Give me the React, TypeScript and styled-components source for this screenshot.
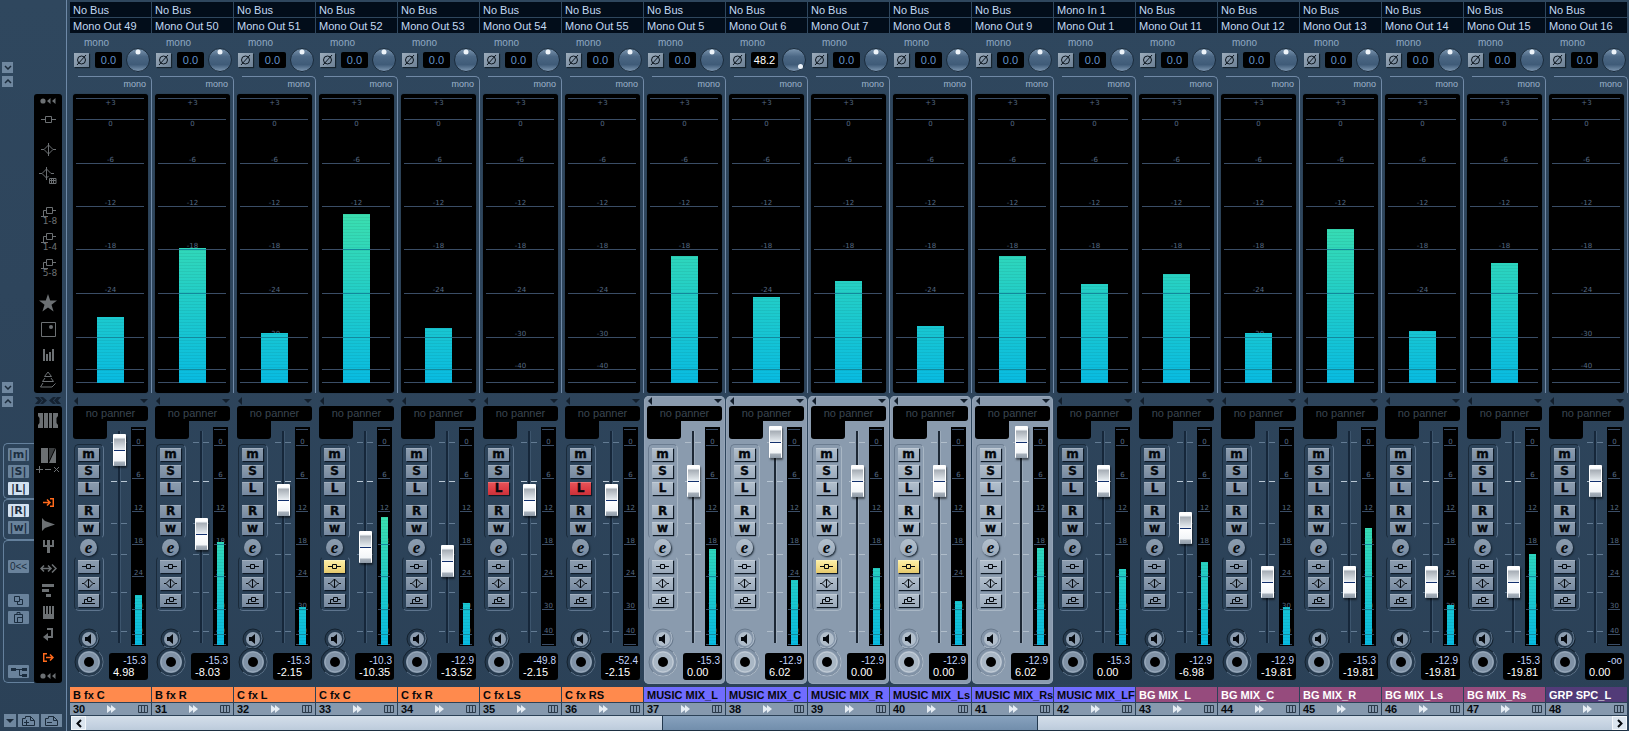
import React, { useState } from 'react';
import styled, { createGlobalStyle, css } from 'styled-components';

const sans = '"Liberation Sans", Arial, sans-serif';
const wide = '"DejaVu Sans", Verdana, sans-serif';

const GlobalStyle = createGlobalStyle`
  * { box-sizing: border-box; }
  body { margin: 0; background: #2c4359; font-family: ${sans}; font-size: 11px; color: #c3d9f2; }
  button { font: inherit; color: inherit; padding: 0; border: 0; background: none; cursor: pointer; }
  svg { display: block; }
`;

/* ---------- data ---------- */

type Channel = {
  id: number;
  name: string;
  tone: string;
  light?: boolean;
  input?: string;
  output: string;
  pan?: string;
  level: number;
  slim: number;
  fader: number;
  peak: string;
  gain: string;
  selected?: boolean;
  listen?: boolean;
  insert?: boolean;
};

const ORANGE = '#ff8a4d';
const BLUE = '#706cff';
const PLUM = '#964b7d';
const VIOLET = '#523b78';

const channels: Channel[] = [
  { id: 30, name: 'B fx C', tone: ORANGE, output: 'Mono Out 49', level: 66, slim: 50, fader: 182, peak: '-15.3', gain: '4.98' },
  { id: 31, name: 'B fx R', tone: ORANGE, output: 'Mono Out 50', level: 135, slim: 103, fader: 98, peak: '-15.3', gain: '-8.03' },
  { id: 32, name: 'C fx L', tone: ORANGE, output: 'Mono Out 51', level: 50, slim: 38, fader: 132, peak: '-15.3', gain: '-2.15' },
  { id: 33, name: 'C fx C', tone: ORANGE, output: 'Mono Out 52', level: 169, slim: 128, fader: 85, peak: '-10.3', gain: '-10.35', insert: true },
  { id: 34, name: 'C fx R', tone: ORANGE, output: 'Mono Out 53', level: 55, slim: 42, fader: 71, peak: '-12.9', gain: '-13.52' },
  { id: 35, name: 'C fx LS', tone: ORANGE, output: 'Mono Out 54', level: 0, slim: 0, fader: 132, peak: '-49.8', gain: '-2.15', listen: true },
  { id: 36, name: 'C fx RS', tone: ORANGE, output: 'Mono Out 55', level: 0, slim: 0, fader: 132, peak: '-52.4', gain: '-2.15', listen: true },
  { id: 37, name: 'MUSIC MIX_L', tone: BLUE, output: 'Mono Out 5', level: 127, slim: 96, fader: 151, peak: '-15.3', gain: '0.00', selected: true },
  { id: 38, name: 'MUSIC MIX_C', tone: BLUE, output: 'Mono Out 6', pan: '48.2', level: 86, slim: 65, fader: 190, peak: '-12.9', gain: '6.02', selected: true },
  { id: 39, name: 'MUSIC MIX_R', tone: BLUE, output: 'Mono Out 7', level: 102, slim: 77, fader: 151, peak: '-12.9', gain: '0.00', selected: true, insert: true },
  { id: 40, name: 'MUSIC MIX_Ls', tone: BLUE, output: 'Mono Out 8', level: 57, slim: 44, fader: 151, peak: '-12.9', gain: '0.00', selected: true, insert: true },
  { id: 41, name: 'MUSIC MIX_Rs', tone: BLUE, output: 'Mono Out 9', level: 127, slim: 97, fader: 190, peak: '-12.9', gain: '6.02', selected: true },
  { id: 42, name: 'MUSIC MIX_LFE', tone: BLUE, input: 'Mono In 1', output: 'Mono Out 1', level: 99, slim: 76, fader: 151, peak: '-15.3', gain: '0.00' },
  { id: 43, name: 'BG MIX_L', tone: PLUM, light: true, output: 'Mono Out 11', level: 109, slim: 83, fader: 104, peak: '-12.9', gain: '-6.98' },
  { id: 44, name: 'BG MIX_C', tone: PLUM, light: true, output: 'Mono Out 12', level: 50, slim: 38, fader: 50, peak: '-12.9', gain: '-19.81' },
  { id: 45, name: 'BG MIX_R', tone: PLUM, light: true, output: 'Mono Out 13', level: 154, slim: 117, fader: 50, peak: '-15.3', gain: '-19.81' },
  { id: 46, name: 'BG MIX_Ls', tone: PLUM, light: true, output: 'Mono Out 14', level: 52, slim: 40, fader: 50, peak: '-12.9', gain: '-19.81' },
  { id: 47, name: 'BG MIX_Rs', tone: PLUM, light: true, output: 'Mono Out 15', level: 120, slim: 91, fader: 50, peak: '-15.3', gain: '-19.81' },
  { id: 48, name: 'GRP SPC_L', tone: VIOLET, light: true, output: 'Mono Out 16', level: 0, slim: 0, fader: 151, peak: '-oo', gain: '0.00' },
];

/* ---------- page frame ---------- */

const Page = styled.div`
  display: flex;
  min-height: 100vh;
  background: linear-gradient(#2f475e, #2e455c 40%, #2b4157);
`;

const Sidebar = styled.aside`
  flex: none;
  width: 67px;
  display: flex;
  border-right: 1px solid #6e89a7;
`;

const Mixer = styled.main`
  flex: 1;
  min-width: 0;
  margin-left: 3px;
  display: flex;
  flex-direction: column;
`;

const Strips = styled.div`
  display: flex;
  overflow: hidden;
`;

/* ---------- channel strip ---------- */

const Strip = styled.section`
  flex: none;
  width: 82px;
  padding-top: 2px;
`;

const Bus = styled.button`
  display: block;
  width: 81px;
  height: 15px;
  margin-bottom: 1px;
  padding-left: 3px;
  line-height: 16px;
  text-align: left;
  white-space: nowrap;
  background: #020d1a;
`;

const InputArea = styled.div`
  height: 43px;
  margin-top: -1px;
  padding-top: 4px;
`;

const Tag = styled.div`
  height: 11px;
  padding-left: 14px;
  font-size: 10px;
  line-height: 11px;
  color: #8ea8c2;
`;

const InputRow = styled.div`
  display: flex;
  align-items: center;
  height: 24px;
  padding-left: 4px;
`;

const PhaseButton = styled.button`
  width: 15px;
  height: 14px;
  background: linear-gradient(135deg, #9dadbc, #6c8095);
  box-shadow: 1px 1px 1px #16242f;
  color: #0b141d;
`;

const PanField = styled.input<{ $bright?: boolean }>`
  width: 27px;
  height: 16px;
  margin: 0 4px 0 6px;
  padding: 0;
  border: 0;
  border-radius: 2px;
  background: #000;
  color: ${p => (p.$bright ? '#fff' : '#6293cb')};
  font: 11px ${sans};
  text-align: center;
`;

const KnobLabel = styled.label`
  display: grid;
  width: 24px;
  height: 24px;
  > * { grid-area: 1 / 1; }
`;

const HiddenRange = styled.input`
  width: 24px;
  height: 24px;
  margin: 0;
  opacity: 0;
`;

const FrameTitle = styled.div`
  height: 18px;
  margin-left: 8px;
  padding: 0 5px 0 0;
  border: 1px solid #7089a6;
  border-width: 1px 1px 0 0;
  border-top-right-radius: 5px;
  font-size: 9px;
  line-height: 14px;
  text-align: right;
  color: #9db4cb;
`;

const FrameBody = styled.div`
  padding-left: 3px;
  border-right: 1px solid #7089a6;
`;

const MeterWell = styled.div`
  width: 75px;
  border-radius: 3px;
  background: #000;
  box-shadow: 0 0 1px #15222f;
`;

const Panel = styled.div<{ $selected?: boolean }>`
  width: 81px;
  height: 288px;
  margin: 3px 0;
  border-radius: 5px;
  ${p =>
    p.$selected &&
    css`
      background: #8a9bae;
      box-shadow: inset 0 0 1px 1px #95a6b8;
    `}
`;

const PanelHead = styled.div`
  display: flex;
  justify-content: space-between;
  align-items: center;
  height: 10px;
  padding: 0 3px 0 4px;
  color: #131f2c;
`;

const Panner = styled.div`
  width: 75px;
  height: 15px;
  margin-left: 3px;
  border-radius: 3px 3px 3px 0;
  background: #000;
  font-size: 11px;
  line-height: 14px;
  text-align: center;
  color: #3b4650;
`;

const PanelBody = styled.div`
  display: flex;
`;

const Controls = styled.div`
  flex: none;
  width: 36px;
  padding-left: 3px;
`;

const PannerTail = styled.div`
  width: 34px;
  height: 18px;
  margin-bottom: 5px;
  border-radius: 0 0 3px 3px;
  background: #000;
`;

const Group = styled.div<{ $open: 'bottom' | 'top'; $selected?: boolean }>`
  display: flex;
  flex-direction: column;
  gap: 4px;
  width: 30px;
  margin-left: 1px;
  padding: 3px;
  border: 1px solid ${p => (p.$selected ? '#a9b7c5' : '#5e758e')};
  border-left-color: ${p => (p.$selected ? '#6b7c90' : '#1a2a3a')};
  border-top-color: ${p => (p.$open === 'top' ? 'transparent' : p.$selected ? '#6b7c90' : '#1a2a3a')};
  border-bottom-color: ${p => (p.$open === 'bottom' ? 'transparent' : p.$selected ? '#a9b7c5' : '#5e758e')};
  border-radius: 5px;
`;

const face = {
  normal: 'linear-gradient(#8c9db0, #8495a8 50%, #7588a0)',
  selected: 'linear-gradient(#b3c0cd, #a8b6c5 50%, #9aa9ba)',
  red: 'linear-gradient(#e8555a, #dd3c44 60%, #c9323a)',
  yellow: 'linear-gradient(#fdf0a8, #f3dc86 60%, #e5c96c)',
};

const Key = styled.button<{ $face: keyof typeof face; $spaced?: boolean }>`
  display: grid;
  place-items: center;
  width: 21px;
  height: 13px;
  margin-top: ${p => (p.$spaced ? '6px' : '0')};
  background: ${p => face[p.$face]};
  box-shadow: 1px 1px 1px #0f1a26, inset 0 1px 0 rgba(255, 255, 255, 0.2);
  color: #05090e;
  font: 900 12px/13px ${wide};
  -webkit-text-stroke: 0.4px #05090e;
`;

const EditButton = styled.button<{ $selected?: boolean }>`
  display: block;
  width: 17px;
  height: 17px;
  margin-left: 7px;
  border-radius: 50%;
  background: ${p => (p.$selected ? face.selected : face.normal)};
  box-shadow: 1px 1px 2px #101c28;
  color: #05090e;
  font: italic bold 17px/13px "Liberation Serif", "Times New Roman", serif;
`;

const MonitorButton = styled.button`
  display: block;
  margin: 17px 0 0 5px;
`;

const RecordButton = styled.button`
  display: block;
  margin: -3px 0 0 1px;
`;

const LevelArea = styled.div`
  padding-left: 3px;
`;

const LevelRow = styled.div`
  display: flex;
  height: 232px;
`;

const FaderCell = styled.div`
  display: grid;
  justify-items: center;
  width: 20px;
  margin-right: 2px;
  > * { grid-area: 1 / 1; }
`;

const FaderInput = styled.input`
  appearance: none;
  writing-mode: vertical-lr;
  direction: rtl;
  width: 13px;
  height: 222px;
  margin: 5px 0 0;
  background: transparent;
  &::-webkit-slider-runnable-track { width: 13px; background: transparent; }
  &::-webkit-slider-thumb {
    appearance: none;
    width: 13px;
    height: 32px;
    border: solid #ffffff;
    border-width: 0 1px;
    border-radius: 1px;
    background: linear-gradient(
      #ffffff 0 3px, #eef3f7 4px, #a6adb5 5px, #dde3e8 14px, #eef2f6 16px,
      #12306e 16px 17px, #ffffff 17px, #f2f5f8 27px, #a9b2bc 28px, #8f9ba8
    );
    box-shadow: 1px 2px 2px rgba(0, 0, 0, 0.5);
  }
`;

const SlimWell = styled.div`
  width: 15px;
  height: 219px;
  margin-top: 6px;
  background: #000;
`;

const Readout = styled.div`
  width: 39px;
  height: 27px;
  padding: 2px 2px 0 4px;
  border-radius: 3px;
  background: #000;
  line-height: 11px;
`;

const Peak = styled.output`
  display: block;
  font-size: 10px;
  line-height: 12px;
  text-align: right;
  color: #c1d4fb;
`;

const Gain = styled.output`
  display: block;
  color: #fff;
`;

const Name = styled.div<{ $tone: string; $light?: boolean }>`
  width: 81px;
  height: 15px;
  padding-left: 3px;
  overflow: hidden;
  background: ${p => p.$tone};
  color: ${p => (p.$light ? '#fff' : '#08080c')};
  font-weight: bold;
  line-height: 16px;
  white-space: nowrap;
`;

const NumberRow = styled.div`
  display: grid;
  grid-template-columns: 34px 31px 10px;
  align-items: center;
  width: 81px;
  height: 12px;
  margin: 1px 0;
  padding-left: 3px;
  background: #8699ae;
  color: #06090d;
  font-weight: bold;
  line-height: 12px;
`;

/* ---------- scroll bar ---------- */

const ScrollBar = styled.div`
  display: flex;
  height: 15px;
  margin: 0 2px 0 1px;
  border-bottom: 1px solid #1d3042;
`;

const ScrollArrow = styled.button`
  flex: none;
  display: grid;
  place-items: center;
  width: 15px;
  background: #dbe5ef;
  border: 1px solid #f3f7fb;
  color: #05090e;
`;

const Trough = styled.div`
  flex: 1;
  display: flex;
  background: linear-gradient(#d3dee9, #c6d3e2 60%, #bccbdb);
`;

const ScrollSpace = styled.div<{ $share: number }>`
  flex: ${p => p.$share};
`;

const ScrollThumb = styled.div<{ $share: number }>`
  flex: ${p => p.$share};
  border: 1px solid #22384e;
  border-width: 0 1px;
  background: linear-gradient(#88a2be, #7a96b3 60%, #728eac);
`;

/* ---------- sidebar ---------- */

const Rail = styled.div`
  flex: none;
  width: 34px;
  display: flex;
  flex-direction: column;
  padding-top: 62px;
`;

const FoldPair = styled.div<{ $before?: number }>`
  display: flex;
  flex-direction: column;
  gap: 3px;
  margin: ${p => p.$before ?? 0}px 0 0 2px;
`;

const FoldButton = styled.button`
  display: grid;
  place-items: center;
  width: 11px;
  height: 11px;
  background: #6f879f;
  color: #1b2b3b;
`;

const RailGroup = styled.div<{ $before?: number; $height: number }>`
  display: flex;
  flex-direction: column;
  gap: 4px;
  height: ${p => p.$height}px;
  margin: ${p => p.$before ?? 0}px 0 0 3px;
  padding: 4px;
  border: 1px solid #64809c;
  border-right: 0;
  border-radius: 5px 0 0 5px;
`;

const RailKey = styled.button<{ $on?: boolean; $before?: number }>`
  display: grid;
  place-items: center;
  width: 21px;
  height: 13px;
  margin-top: ${p => p.$before ?? 0}px;
  border-radius: 1px;
  background: ${p => (p.$on ? '#d3e2f1' : '#69829b')};
  color: #1b2d3f;
  font: bold 11px/13px ${wide};
  white-space: nowrap;
`;

const Plain = styled.span`
  font: 10px/13px ${sans};
`;

const IconRail = styled.div`
  flex: none;
  width: 28px;
  display: flex;
  flex-direction: column;
  padding-top: 94px;
`;

const IconColumn = styled.div<{ $height: number }>`
  display: flex;
  flex-direction: column;
  height: ${p => p.$height}px;
  border-radius: 3px;
  background: #000;
  color: #6c7073;
`;

const Slot = styled.button<{ $size: number; $before?: number; $hot?: boolean }>`
  display: flex;
  flex-direction: column;
  align-items: center;
  justify-content: center;
  height: ${p => p.$size}px;
  margin-top: ${p => p.$before ?? 0}px;
  color: ${p => (p.$hot ? '#ff6a1c' : 'inherit')};
`;

const Range = styled.span`
  padding-left: 4px;
  font: 9px/7px ${wide};
`;

const Joint = styled.div`
  display: flex;
  justify-content: center;
  align-items: center;
  height: 13px;
  padding-top: 1px;
  color: #142130;
`;

const BottomKeys = styled.div`
  display: flex;
  gap: 2px;
  width: 60px;
  margin: 31px 0 0 4px;
`;

const BottomKey = styled.button<{ $w: number }>`
  display: grid;
  place-items: center;
  flex: none;
  width: ${p => p.$w}px;
  height: 13px;
  background: #6f879f;
  color: #1b2b3b;
`;

/* ---------- drawings ---------- */

const stroke = { fill: 'none', stroke: 'currentColor', strokeWidth: 1 } as const;

const Phase = () => (
  <svg width="15" height="14" viewBox="0 0 15 14" {...stroke}>
    <circle cx="7.5" cy="7" r="4" />
    <path d="M3 12L12 2" />
  </svg>
);

const InsertIcon = () => (
  <svg width="15" height="7" viewBox="0 0 15 7" {...stroke}>
    <path d="M0 3.5H4.500M10.500 3.5H15M4.500 .5H10.500V6.500H4.500Z" />
  </svg>
);

const KeyInsertIcon = () => (
  <svg width="15" height="5" viewBox="0 0 15 5" {...stroke}>
    <path d="M1 2.500H5.500M9.500 2.500H14M5.500 .5H9.500V4.500H5.500Z" />
  </svg>
);

const EqIcon = () => (
  <svg width="15" height="15" viewBox="0 0 15 15" {...stroke}>
    <path d="M0 7.5H3L7.5 3L12 7.5H15M3 7.5L7.5 12L12 7.5M7.5 1V14" />
  </svg>
);

const SmallEqIcon = () => (
  <svg width="15" height="11" viewBox="0 0 15 11" {...stroke}>
    <path d="M1 5.5H3L7.5 1L12 5.5H14M3 5.5L7.5 10L12 5.5M7.5 1V10" />
  </svg>
);

const SendIcon = () => (
  <svg width="15" height="7" viewBox="0 0 15 7" {...stroke}>
    <path d="M1 6.500H14M3.500 6V2.500H6.500M6.500 .5H10.500V4.500H6.500ZM11 2.500H13.500" />
  </svg>
);

const RoutedIcon = () => (
  <svg width="15" height="12" viewBox="0 0 15 12" {...stroke}>
    <path d="M0 10.500H7M2.500 10V4.500H5M5.500 1.500H11.500V7.500H5.500ZM12 4.500H15" />
  </svg>
);

const Speaker = ({ selected }: { selected?: boolean }) => (
  <svg width="22" height="22" viewBox="0 0 22 22">
    <circle cx="11" cy="11" r="10" fill={selected ? '#8394a8' : '#263a4e'} stroke={selected ? '#68798c' : '#14222f'} />
    <path d="M18 4A10 10 0 0 1 4 18" fill="none" stroke={selected ? '#b0bdcb' : '#60778f'} />
    <circle cx="11" cy="11" r="7" fill={selected ? '#b1becb' : '#8c9db0'} />
    <path d="M7 9H9.500L13 6V16L9.500 13H7Z" fill="#05090e" />
  </svg>
);

const RecordDial = ({ selected }: { selected?: boolean }) => (
  <svg width="30" height="30" viewBox="0 0 30 30">
    <circle cx="15" cy="15" r="14" fill={selected ? '#8192a6' : '#263a4e'} stroke={selected ? '#68798c' : '#14222f'} />
    <path d="M25 5A14 14 0 0 1 5 25" fill="none" stroke={selected ? '#b0bdcb' : '#60778f'} />
    <circle cx="15" cy="15" r="11" fill={selected ? '#a9b7c5' : '#8092a6'} />
    <circle cx="15" cy="15" r="10" fill="none" stroke={selected ? '#c4ced9' : '#9aabbc'} />
    <circle cx="15" cy="15" r="5" fill="#000" />
  </svg>
);

const Knob = ({ turned }: { turned?: boolean }) => (
  <svg width="24" height="24" viewBox="0 0 24 24">
    <defs>
      <linearGradient id="knobFace" x1="0" y1="0" x2="0" y2="1">
        <stop offset="0" stopColor="#7d97b1" />
        <stop offset="0.35" stopColor="#4b6784" />
        <stop offset="0.7" stopColor="#3f5b78" />
        <stop offset="1" stopColor="#8099b3" />
      </linearGradient>
    </defs>
    <circle cx="12" cy="12" r="11.500" fill="url(#knobFace)" stroke="#1a2b3b" />
    <circle cx={turned ? 18.5 : 12} cy={turned ? 18.5 : 4} r="2.500" fill="#eef4fa" />
  </svg>
);

const Arrow = ({ d, w, h }: { d: string; w: number; h: number }) => (
  <svg width={w} height={h} viewBox={`0 0 ${w} ${h}`}>
    <path d={d} fill="currentColor" />
  </svg>
);

const Chevron = ({ up }: { up?: boolean }) => (
  <svg width="8" height="5" viewBox="0 0 8 5" fill="none" stroke="currentColor" strokeWidth="1.500">
    <path d={up ? 'M1 4L4 1L7 4' : 'M1 1L4 4L7 1'} />
  </svg>
);

const Dots = () => (
  <svg width="16" height="6" viewBox="0 0 16 6" fill="currentColor">
    <circle cx="3" cy="3" r="2.600" />
    <path d="M10.500 0V6L7 3ZM15.500 0V6L12 3Z" />
  </svg>
);

/* ---------- meters ---------- */

type Tick = { y: number; label?: string; below?: boolean };

const wideTicks: Tick[] = [
  { y: 4, label: '+3', below: true },
  { y: 25, label: '0', below: true },
  { y: 69, label: '-6' },
  { y: 112, label: '-12' },
  { y: 155, label: '-18' },
  { y: 199, label: '-24' },
  { y: 243, label: '-30' },
  { y: 275, label: '-40' },
  { y: 288 },
];

const slimTicks: Tick[] = [
  { y: 2 },
  { y: 18, label: '0' },
  { y: 51, label: '6' },
  { y: 84, label: '12' },
  { y: 117, label: '18' },
  { y: 149, label: '24' },
  { y: 182, label: '30' },
  { y: 207, label: '40' },
  { y: 217 },
];

type MeterProps = {
  id: string;
  width: number;
  height: number;
  ticks: Tick[];
  inset: number;
  barX: number;
  barWidth: number;
  base: number;
  level: number;
};

const Meter = ({ id, width, height, ticks, inset, barX, barWidth, base, level }: MeterProps) => {
  const span = base * 0.6;
  return (
    <svg width={width} height={height} viewBox={`0 0 ${width} ${height}`}>
      <defs>
        <linearGradient id={`${id}-fill`} gradientUnits="userSpaceOnUse" x1="0" y1={base} x2="0" y2={base - span}>
          <stop offset="0" stopColor="#08bbe2" />
          <stop offset="1" stopColor="#3ce0ae" />
        </linearGradient>
        <pattern id={`${id}-scan`} width="4" height="3" patternUnits="userSpaceOnUse">
          <rect width="4" height="1" fill="#000" opacity="0.06" />
        </pattern>
      </defs>
      <g fill="#3a4d66">
        {ticks.map(t => (
          <rect key={t.y} x={inset} y={t.y} width={width - inset * 2 - 1} height="1" />
        ))}
      </g>
      <g fill="#566a84" fontFamily={wide} fontSize="7" textAnchor="middle">
        {ticks.map(
          t =>
            t.label && (
              <text key={t.y} x={width / 2} y={t.below ? t.y + 7 : t.y - 1}>
                {t.label}
              </text>
            ),
        )}
      </g>
      {level > 0 && (
        <g>
          <rect x={barX} y={base - level} width={barWidth} height={level} fill={`url(#${id}-fill)`} />
          <rect x={barX} y={base - level} width={barWidth} height={level} fill={`url(#${id}-scan)`} />
          {ticks
            .filter(t => t.y > base - level && t.y < base - 1)
            .map(t => (
              <rect key={t.y} x={barX} y={t.y} width={barWidth} height="1" fill="#12899c" />
            ))}
        </g>
      )}
    </svg>
  );
};

const faderTicks = [21, 60, 102, 133, 171, 210];

const FaderScale = ({ selected }: { selected?: boolean }) => (
  <svg width="20" height="232" viewBox="0 0 20 232">
    {faderTicks.map(y => (
      <path
        key={y}
        d={`M2 ${y + 0.5}H8M12 ${y + 0.5}H18`}
        stroke={y === 60 ? '#b9c7d4' : selected ? '#b0bdca' : '#637b93'}
      />
    ))}
    <rect x="9" y="10" width="2" height="212" fill={selected ? '#1d2835' : '#16273a'} />
    <rect x="11" y="10" width="1" height="212" fill={selected ? '#9cabbb' : '#3d556d'} />
  </svg>
);

/* ---------- composed parts ---------- */

const ChannelStrip = ({ ch }: { ch: Channel }) => {
  const [fader, setFader] = useState(ch.fader);
  const base = ch.selected ? 'selected' : 'normal';
  return (
    <Strip aria-label={ch.name}>
      <Bus>{ch.input ?? 'No Bus'}</Bus>
      <Bus>{ch.output}</Bus>
      <InputArea>
        <Tag>mono</Tag>
        <InputRow>
          <PhaseButton aria-label="Phase invert"><Phase /></PhaseButton>
          <PanField aria-label="Input gain" defaultValue={ch.pan ?? '0.0'} $bright={!!ch.pan} />
          <KnobLabel>
            <Knob turned={!!ch.pan} />
            <HiddenRange type="range" aria-label="Input gain knob" min={-48} max={48} defaultValue={Number(ch.pan ?? 0)} />
          </KnobLabel>
        </InputRow>
      </InputArea>
      <FrameTitle>mono</FrameTitle>
      <FrameBody>
        <MeterWell>
          <Meter id={`m${ch.id}`} width={75} height={299} ticks={wideTicks} inset={3} barX={24} barWidth={27} base={289} level={ch.level} />
        </MeterWell>
      </FrameBody>
      <Panel $selected={ch.selected}>
        <PanelHead>
          <Arrow d="M4 0V8L0 4Z" w={4} h={8} />
          <Arrow d="M0 0H8L4 4Z" w={8} h={4} />
        </PanelHead>
        <Panner>no panner</Panner>
        <PanelBody>
          <Controls>
            <PannerTail />
            <Group $open="bottom" $selected={ch.selected}>
              <Key $face={base} aria-label="Mute">m</Key>
              <Key $face={base} aria-label="Solo">S</Key>
              <Key $face={ch.listen ? 'red' : base} aria-label="Listen">L</Key>
              <Key $face={base} $spaced aria-label="Read automation">R</Key>
              <Key $face={base} aria-label="Write automation">w</Key>
            </Group>
            <EditButton $selected={ch.selected} aria-label="Edit channel">e</EditButton>
            <Group $open="top" $selected={ch.selected}>
              <Key $face={ch.insert ? 'yellow' : base} aria-label="Inserts"><KeyInsertIcon /></Key>
              <Key $face={base} aria-label="Equalizer"><SmallEqIcon /></Key>
              <Key $face={base} aria-label="Sends"><SendIcon /></Key>
            </Group>
            <MonitorButton aria-label="Monitor"><Speaker selected={ch.selected} /></MonitorButton>
            <RecordButton aria-label="Record enable"><RecordDial selected={ch.selected} /></RecordButton>
          </Controls>
          <LevelArea>
            <LevelRow>
              <FaderCell>
                <FaderScale selected={ch.selected} />
                <FaderInput
                  type="range"
                  aria-label={`${ch.name} level`}
                  min={0}
                  max={190}
                  value={fader}
                  onChange={e => setFader(Number(e.target.value))}
                />
              </FaderCell>
              <SlimWell>
                <Meter id={`s${ch.id}`} width={15} height={219} ticks={slimTicks} inset={1} barX={4} barWidth={7} base={218} level={ch.slim} />
              </SlimWell>
            </LevelRow>
            <Readout>
              <Peak>{ch.peak}</Peak>
              <Gain>{ch.gain}</Gain>
            </Readout>
          </LevelArea>
        </PanelBody>
      </Panel>
      <Name $tone={ch.tone} $light={ch.light}>{ch.name}</Name>
      <NumberRow>
        <span>{ch.id}</span>
        <svg width="9" height="8" viewBox="0 0 9 8" fill="#e6edf4">
          <path d="M0 0L4 3V0L9 4L4 8V5L0 8Z" />
        </svg>
        <svg width="10" height="8" viewBox="0 0 10 8" fill="none" stroke="#2b3a4a">
          <path d="M.5 .5H9.500V7.500H.5ZM3.500 .5V7.500M6.500 .5V7.500" />
        </svg>
      </NumberRow>
    </Strip>
  );
};

const LeftRail = () => (
  <Rail>
    <FoldPair>
      <FoldButton aria-label="Hide upper row"><Chevron /></FoldButton>
      <FoldButton aria-label="Show upper row"><Chevron up /></FoldButton>
    </FoldPair>
    <FoldPair $before={295}>
      <FoldButton aria-label="Hide middle row"><Chevron /></FoldButton>
      <FoldButton aria-label="Show middle row"><Chevron up /></FoldButton>
    </FoldPair>
    <RailGroup $before={36} $height={56}>
      <RailKey aria-label="Mute all">|m|</RailKey>
      <RailKey aria-label="Solo all">|S|</RailKey>
      <RailKey $on aria-label="Listen all">|L|</RailKey>
    </RailGroup>
    <RailGroup $height={41}>
      <RailKey $on aria-label="Read all">|R|</RailKey>
      <RailKey aria-label="Write all">|w|</RailKey>
    </RailGroup>
    <RailGroup $height={143}>
      <RailKey $before={15} aria-label="Reset"><Plain>0&lt;&lt;</Plain></RailKey>
      <RailKey $before={17} aria-label="Copy">
        <svg width="11" height="9" viewBox="0 0 11 9" {...stroke}><path d="M1.500 .5H6.500V5.500H1.500ZM4.500 5.500V8.500H9.500V3.500H6.500" /></svg>
      </RailKey>
      <RailKey aria-label="Paste">
        <svg width="11" height="11" viewBox="0 0 11 11" {...stroke}><path d="M1.500 2.500H9.500V10.500H1.500ZM4 2.500V.5H7V2.500M4.500 5.500H9.500M4.500 5.500V10.500" /></svg>
      </RailKey>
      <RailKey $before={37} aria-label="Routing">
        <svg width="16" height="10" viewBox="0 0 16 10" {...stroke}><path d="M5 2.500H11M8.500 2.500V8.500H11" /><path d="M0 1H5V4H0ZM11 1H16V4H11ZM11 7H16V10H11Z" fill="currentColor" stroke="none" /></svg>
      </RailKey>
    </RailGroup>
    <BottomKeys>
      <BottomKey $w={12} aria-label="Mixer menu"><Arrow d="M0 0H8L4 4Z" w={8} h={4} /></BottomKey>
      <BottomKey $w={21} aria-label="Add view">
        <svg width="13" height="10" viewBox="0 0 13 10" {...stroke}><path d="M3.500 2V.5H8.500L12.500 4.500V9.500H.5V2.500H3.500M8.500 .5V4.500H12M2 6.500H7M4.500 4V9" /></svg>
      </BottomKey>
      <BottomKey $w={21} aria-label="Remove view">
        <svg width="13" height="10" viewBox="0 0 13 10" {...stroke}><path d="M3.500 2V.5H8.500L12.500 4.500V9.500H.5V2.500H3.500M8.500 .5V4.500H12M2 6.500H7" /></svg>
      </BottomKey>
    </BottomKeys>
  </Rail>
);

const IconStrip = () => (
  <IconRail>
    <IconColumn $height={299}>
      <Slot $size={14} aria-label="Extended view"><Dots /></Slot>
      <Slot $size={22} aria-label="Inserts view"><InsertIcon /></Slot>
      <Slot $size={26} $before={6} aria-label="EQ view"><EqIcon /></Slot>
      <Slot $size={26} aria-label="EQ curve view">
        <svg width="18" height="17" viewBox="0 0 18 17" {...stroke}>
          <path d="M0 6.500H3L7.500 2L12 6.500H15M3 6.500L7.500 11L9.500 9M7.500 0V13" />
          <path d="M10.500 11.500H17V16.500H10.500ZM12.500 11V17M14.500 11V17M10 13.500H17" />
        </svg>
      </Slot>
      <Slot $size={26} $before={14} aria-label="Sends 1-8"><RoutedIcon /><Range>1-8</Range></Slot>
      <Slot $size={26} aria-label="Sends 1-4"><RoutedIcon /><Range>1-4</Range></Slot>
      <Slot $size={26} aria-label="Sends 5-8"><RoutedIcon /><Range>5-8</Range></Slot>
      <Slot $size={26} $before={10} aria-label="Favorites">
        <Arrow d="M9 0L11.200 6.600H18L12.500 10.800L14.600 17.500L9 13.400L3.400 17.500L5.500 10.800L0 6.600H6.800Z" w={18} h={18} />
      </Slot>
      <Slot $size={26} aria-label="Panner view">
        <svg width="15" height="15" viewBox="0 0 15 15" {...stroke}><path d="M.5 .5H14.500V14.500H.5Z" /><circle cx="10" cy="5" r="2" fill="currentColor" stroke="none" /></svg>
      </Slot>
      <Slot $size={25} aria-label="Meter view">
        <Arrow d="M0 0H2V12H0ZM3 5H5V12H3ZM6 3H8V12H6ZM9 0H11V12H9Z" w={11} h={12} />
      </Slot>
      <Slot $size={25} aria-label="Surround view">
        <svg width="16" height="17" viewBox="0 0 16 17" {...stroke}>
          <path d="M4.500 5.500L8 1L11.500 5.500ZM5 7L2.500 10.500H13.500L11 7M3 12L.5 16H12L15.500 12.500" />
        </svg>
      </Slot>
    </IconColumn>
    <Joint>
      <svg width="26" height="7" viewBox="0 0 26 7" fill="currentColor">
        <path d="M0 0H4L7 3.500L4 7H0L3 3.500ZM5 0H8L12 3.500L8 7H5L8 3.500ZM26 0H22L19 3.500L22 7H26L23 3.500ZM21 0H18L14 3.500L18 7H21L18 3.500Z" />
      </svg>
    </Joint>
    <IconColumn $height={277}>
      <Slot $size={28} aria-label="Channel types">
        <Arrow d="M0 0H5V15H0V12L1.500 10V5L0 3ZM6 0H10V15H6ZM11 0H14V15H11ZM15 0H20V3L18.500 5V10L20 12V15H15Z" w={20} h={15} />
      </Slot>
      <Slot $size={16} $before={13} aria-label="Narrow or wide">
        <svg width="15" height="15" viewBox="0 0 15 15"><path d="M0 0H7V15H0Z" fill="currentColor" /><path d="M8 15L15 0V15Z" fill="#6c7073" /><path d="M8 0H14L8 13Z" fill="#3b3e40" /></svg>
      </Slot>
      <Slot $size={12} aria-label="Zoom">
        <svg width="24" height="7" viewBox="0 0 24 7" {...stroke}><path d="M0 3.500H7M3.500 0V7M9 3.500H15M18 1L23 6M23 1L18 6" /></svg>
      </Slot>
      <Slot $size={22} $before={16} $hot aria-label="Show inputs">
        <svg width="11" height="9" viewBox="0 0 11 9" {...stroke} strokeWidth="1.500"><path d="M0 4.500H6M4 1.500L7 4.500L4 7.500M7 .7H10.300V8.300H7" /></svg>
      </Slot>
      <Slot $size={22} aria-label="Show audio channels"><Arrow d="M0 0L3 3L13 6.500L3 10L0 13Z" w={13} h={13} /></Slot>
      <Slot $size={22} aria-label="Show group channels">
        <Arrow d="M0 0H2V5H4V0H7V5H9V0H11V7H7V13H4V7H0Z" w={11} h={13} />
      </Slot>
      <Slot $size={22} aria-label="Show ReWire channels">
        <svg width="17" height="9" viewBox="0 0 17 9" {...stroke} strokeWidth="1.500"><path d="M1 4.500H11M4 1.500L1 4.500L4 7.500M8 1.500L11 4.500L8 7.500M12 .5L16 4.500L12 8.500" /></svg>
      </Slot>
      <Slot $size={22} aria-label="Show MIDI channels"><Arrow d="M0 0H12V3H0ZM0 5H7V8H0ZM4 10H9V13H4Z" w={12} h={13} /></Slot>
      <Slot $size={22} aria-label="Show instruments">
        <Arrow d="M0 0H2V8H3V0H5V8H6V0H8V8H9V0H11V13H0Z" w={11} h={13} />
      </Slot>
      <Slot $size={23} aria-label="Show effect returns">
        <svg width="11" height="13" viewBox="0 0 11 13" {...stroke} strokeWidth="2"><path d="M4 1H9V9H3" /><path d="M5 5L0 9L5 13Z" fill="currentColor" stroke="none" /></svg>
      </Slot>
      <Slot $size={23} $hot aria-label="Show outputs">
        <svg width="11" height="9" viewBox="0 0 11 9" {...stroke} strokeWidth="1.500"><path d="M4 .7H.7V8.300H4M3 4.500H9M7 1.500L10 4.500L7 7.500" /></svg>
      </Slot>
      <Slot $size={14} aria-label="Hidden channels"><Dots /></Slot>
    </IconColumn>
  </IconRail>
);

export default function App() {
  return (
    <Page>
      <GlobalStyle />
      <Sidebar>
        <LeftRail />
        <IconStrip />
      </Sidebar>
      <Mixer>
        <Strips>
          {channels.map(ch => (
            <ChannelStrip key={ch.id} ch={ch} />
          ))}
        </Strips>
        <ScrollBar>
          <ScrollArrow aria-label="Scroll left">
            <svg width="6" height="9" viewBox="0 0 6 9" fill="none" stroke="currentColor" strokeWidth="2"><path d="M5 1L1.500 4.500L5 8" /></svg>
          </ScrollArrow>
          <Trough>
            <ScrollSpace $share={577} />
            <ScrollThumb $share={375} />
            <ScrollSpace $share={575} />
          </Trough>
          <ScrollArrow aria-label="Scroll right">
            <svg width="6" height="9" viewBox="0 0 6 9" fill="none" stroke="currentColor" strokeWidth="2"><path d="M1 1L4.500 4.500L1 8" /></svg>
          </ScrollArrow>
        </ScrollBar>
      </Mixer>
    </Page>
  );
}
